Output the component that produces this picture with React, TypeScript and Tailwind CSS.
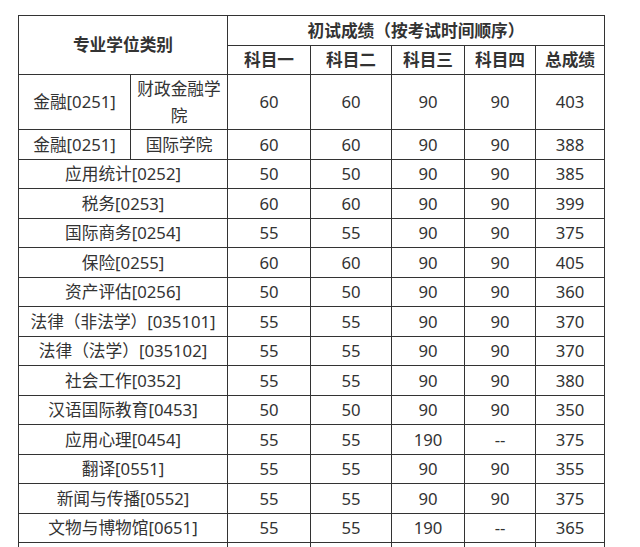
import React from "react";

type Row = { name: string; sub?: string; s1: string; s2: string; s3: string; s4: string; total: string };

const rows: Row[] = [
  { name: "金融[0251]", sub: "国际学院", s1: "60", s2: "60", s3: "90", s4: "90", total: "388" },
  { name: "应用统计[0252]", s1: "50", s2: "50", s3: "90", s4: "90", total: "385" },
  { name: "税务[0253]", s1: "60", s2: "60", s3: "90", s4: "90", total: "399" },
  { name: "国际商务[0254]", s1: "55", s2: "55", s3: "90", s4: "90", total: "375" },
  { name: "保险[0255]", s1: "60", s2: "60", s3: "90", s4: "90", total: "405" },
  { name: "资产评估[0256]", s1: "50", s2: "50", s3: "90", s4: "90", total: "360" },
  { name: "法律（非法学）[035101]", s1: "55", s2: "55", s3: "90", s4: "90", total: "370" },
  { name: "法律（法学）[035102]", s1: "55", s2: "55", s3: "90", s4: "90", total: "370" },
  { name: "社会工作[0352]", s1: "55", s2: "55", s3: "90", s4: "90", total: "380" },
  { name: "汉语国际教育[0453]", s1: "50", s2: "50", s3: "90", s4: "90", total: "350" },
  { name: "应用心理[0454]", s1: "55", s2: "55", s3: "190", s4: "--", total: "375" },
  { name: "翻译[0551]", s1: "55", s2: "55", s3: "90", s4: "90", total: "355" },
  { name: "新闻与传播[0552]", s1: "55", s2: "55", s3: "90", s4: "90", total: "375" },
  { name: "文物与博物馆[0651]", s1: "55", s2: "55", s3: "190", s4: "--", total: "365" },
];

const cell = "border border-[#333] text-center align-middle px-1.5 py-0 whitespace-nowrap";

export default function App() {
  return (
    <div
      className="min-h-[547px] w-[640px] bg-white pt-[15px] pl-[18px] text-[#333] text-[16.7px]"
      style={{ fontFamily: '"Noto Sans", "Noto Sans CJK SC", sans-serif' }}
    >
      <table className="table-fixed border-collapse w-[586px]">
        <colgroup>
          <col className="w-[112px]" />
          <col className="w-[97px]" />
          <col className="w-[83px]" />
          <col className="w-[81px]" />
          <col className="w-[73px]" />
          <col className="w-[71px]" />
          <col className="w-[69px]" />
        </colgroup>
        <tbody>
          <tr className="h-[30px] font-bold">
            <td className={cell} colSpan={2} rowSpan={2}>专业学位类别</td>
            <td className={cell} colSpan={5}>初试成绩（按考试时间顺序）</td>
          </tr>
          <tr className="h-[29px] font-bold">
            <td className={cell}>科目一</td>
            <td className={cell}>科目二</td>
            <td className={cell}>科目三</td>
            <td className={cell}>科目四</td>
            <td className={cell}>总成绩</td>
          </tr>
          <tr className="h-[55px]">
            <td className={cell}>金融[0251]</td>
            <td className="border border-[#333] text-center align-middle px-1.5 py-0 leading-[27px]">财政金融学院</td>
            <td className={cell}>60</td>
            <td className={cell}>60</td>
            <td className={cell}>90</td>
            <td className={cell}>90</td>
            <td className={cell}>403</td>
          </tr>
          {rows.map((r, i) => (
            <tr key={i} className="h-[29.5px]">
              {r.sub ? (
                <>
                  <td className={cell}>{r.name}</td>
                  <td className={cell}>{r.sub}</td>
                </>
              ) : (
                <td className={cell} colSpan={2}>{r.name}</td>
              )}
              <td className={cell}>{r.s1}</td>
              <td className={cell}>{r.s2}</td>
              <td className={cell}>{r.s3}</td>
              <td className={cell}>{r.s4}</td>
              <td className={cell}>{r.total}</td>
            </tr>
          ))}
          <tr className="h-[29.5px]">
            <td className={cell} colSpan={2}>&nbsp;</td>
            <td className={cell}>&nbsp;</td>
            <td className={cell}>&nbsp;</td>
            <td className={cell}>&nbsp;</td>
            <td className={cell}>&nbsp;</td>
            <td className={cell}>&nbsp;</td>
          </tr>
        </tbody>
      </table>
    </div>
  );
}
